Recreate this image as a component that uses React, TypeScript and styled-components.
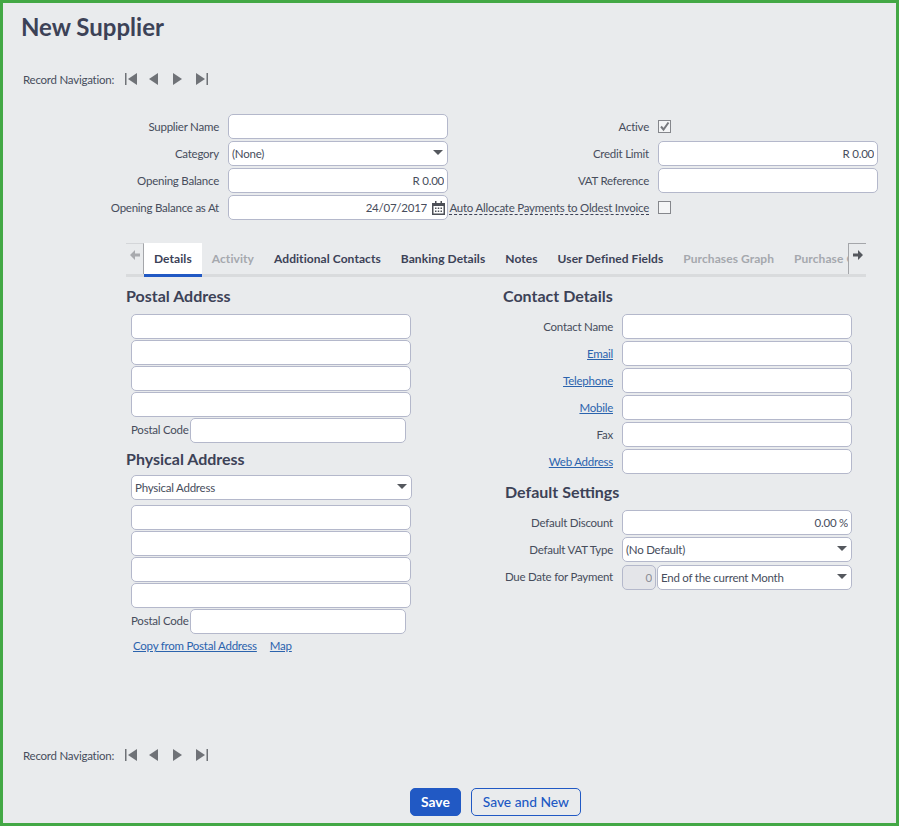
import React from 'react';
import styled, { createGlobalStyle, css } from 'styled-components';

const GlobalStyle = createGlobalStyle`
  html, body { margin: 0; padding: 0; }
  body { font-family: Lato, "Open Sans", sans-serif; font-size: 12px; color: #474d5c; background: #e9ebed; }
`;

// Reference text is 12px but hinted tight, so the advance is narrower than Lato's own
const bodyText = css`
  font-size: 11.5px;
  letter-spacing: -0.24px;
`;

const Page = styled.div`
  box-sizing: border-box;
  width: 899px;
  height: 826px;
  border: 3px solid #43a845;
  background: #e9ebed;
  display: flex;
  flex-direction: column;
  overflow: hidden;
`;

const Title = styled.h1`
  margin: 10px 0 0 18px;
  font-size: 24px;
  line-height: 28px;
  font-weight: 700;
  color: #3c4257;
`;

const NavRow = styled.div<{ $top: number }>`
  display: flex;
  align-items: center;
  height: 18px;
  margin: ${(p) => p.$top}px 0 0 20px;
`;

const NavLabel = styled.span`
  ${bodyText}
  margin-right: 11px;
  color: #474d5c;
`;

const NavButton = styled.svg`
  width: 12px;
  height: 14px;
  margin-right: 12px;
  fill: #6f7277;
  overflow: visible;
`;

const TopForm = styled.div`
  display: grid;
  grid-template-columns: 128px 220px 210px 220px;
  grid-auto-rows: 25px;
  row-gap: 2px;
  margin: 26px 0 0 97px;
`;

const Label = styled.label`
  ${bodyText}
  display: flex;
  align-items: center;
  justify-content: flex-end;
  padding-right: 9px;
  white-space: nowrap;
  color: #474d5c;
`;

const DashedLabel = styled.span`
  border-bottom: 1px dashed #3c4257;
  line-height: 13px;
`;

const Input = styled.input<{ $width?: number; $disabled?: boolean }>`
  ${bodyText}
  box-sizing: border-box;
  display: block;
  width: ${(p) => (p.$width ? `${p.$width}px` : '100%')};
  height: 25px;
  padding: 0 3px;
  border: 1px solid #b4b8cb;
  border-radius: 5px;
  background: ${(p) => (p.$disabled ? '#e4e5e9' : '#fff')};
  font-family: inherit;
  color: ${(p) => (p.$disabled ? '#8b8e96' : '#474d5c')};
  text-align: ${(p) => (p.type === 'tel' ? 'right' : 'left')};
  outline: none;
`;

const SelectBox = styled.div<{ $width?: number }>`
  ${bodyText}
  box-sizing: border-box;
  display: flex;
  align-items: center;
  justify-content: space-between;
  width: ${(p) => (p.$width ? `${p.$width}px` : '100%')};
  height: 25px;
  padding: 0 4px 0 3px;
  border: 1px solid #b4b8cb;
  border-radius: 5px;
  background: #fff;
  color: #474d5c;
`;

const Caret = styled.span`
  width: 0;
  height: 0;
  margin-top: -2px;
  border-left: 5px solid transparent;
  border-right: 5px solid transparent;
  border-top: 5px solid #55585e;
`;

const DateWrap = styled.div`
  position: relative;
`;

const DateInput = styled(Input)`
  padding-right: 20px;
`;

const CalendarIcon = styled.svg`
  position: absolute;
  top: 6px;
  right: 3px;
  width: 13px;
  height: 14px;
`;

const CheckCell = styled.div`
  display: flex;
  align-items: center;
`;

const CheckBox = styled.span`
  box-sizing: border-box;
  display: flex;
  align-items: center;
  justify-content: center;
  width: 13px;
  height: 13px;
  border: 1px solid #85878c;
  background: #f4f5f6;
`;

const TabStrip = styled.div`
  position: relative;
  box-sizing: border-box;
  display: flex;
  width: 740px;
  height: 34px;
  margin: 23px 0 0 123px;
  box-shadow: inset 0 -3px 0 #d9dbdd;
  overflow: hidden;
`;

const TabArrow = styled.div<{ $side: 'left' | 'right' }>`
  flex: none;
  width: 18px;
  height: 31px;
  box-sizing: border-box;
  display: flex;
  justify-content: center;
  padding-top: 6px;
  border-top: 1px solid ${(p) => (p.$side === 'right' ? '#a4a6aa' : '#d4d6d9')};
  border-${(p) => (p.$side === 'right' ? 'left' : 'right')}: 1px solid #a4a6aa;
  background: #e9ebed;
  ${(p) => (p.$side === 'right' ? 'position: absolute; right: 0; top: 0;' : '')}
`;

const Tab = styled.div<{ $active?: boolean; $muted?: boolean }>`
  flex: none;
  box-sizing: border-box;
  height: 34px;
  padding: 9px 10px 0;
  font-size: 12px;
  letter-spacing: 0.07px;
  line-height: 14px;
  font-weight: 700;
  white-space: nowrap;
  background: ${(p) => (p.$active ? '#fff' : 'transparent')};
  border-bottom: ${(p) => (p.$active ? '3px solid #2159c4' : 'none')};
  color: ${(p) => (p.$muted ? '#a5a8ae' : '#3c4257')};
`;

const Columns = styled.div`
  display: flex;
  margin: 9px 0 0 123px;
`;

const LeftColumn = styled.div`
  width: 377px;
`;

const Heading = styled.h2<{ $top?: number; $bottom?: number; $indent?: number }>`
  margin: ${(p) => p.$top ?? 0}px 0 ${(p) => p.$bottom ?? 8}px ${(p) => p.$indent ?? 0}px;
  font-size: 16px;
  line-height: 20px;
  font-weight: 700;
  color: #3c4257;
`;

const AddressStack = styled.div`
  display: flex;
  flex-direction: column;
  gap: 1px;
  margin-left: 5px;
`;

const PostalRow = styled.div`
  display: flex;
  align-items: center;
`;

const PostalLabel = styled.span`
  ${bodyText}
  width: 59px;
  padding-bottom: 3px;
  white-space: nowrap;
`;

const SelectGap = styled.div`
  margin-bottom: 4px;
`;

const LinkRow = styled.div`
  display: flex;
  gap: 13px;
  margin: 3px 0 0 2px;
`;

const TextLink = styled.a`
  ${bodyText}
  line-height: 15px;
  color: #2b63ad;
  text-decoration: underline;
`;

const RightColumn = styled.div`
  width: 360px;
`;

const FieldGrid = styled.div`
  display: grid;
  grid-template-columns: 119px 230px;
  grid-auto-rows: 25px;
  row-gap: 2px;
`;

const RightLabel = styled.div`
  ${bodyText}
  display: flex;
  align-items: center;
  justify-content: flex-end;
  padding-right: 9px;
  white-space: nowrap;
`;

const DueCell = styled.div`
  display: flex;
  gap: 1px;
  margin-top: 1px;
`;

const Spacer = styled.div`
  flex: 1;
`;

const ButtonRow = styled.div`
  display: flex;
  gap: 10px;
  margin: 24px 0 7px 407px;
`;

const Button = styled.button<{ $primary?: boolean }>`
  box-sizing: border-box;
  height: 28px;
  padding: 0 ${(p) => (p.$primary ? 10 : 11)}px 2px;
  border: 1px solid #2159c4;
  border-radius: 5px;
  background: ${(p) => (p.$primary ? '#2159c4' : 'transparent')};
  color: ${(p) => (p.$primary ? '#fff' : '#2159c4')};
  font-family: inherit;
  font-size: 13.8px;
  font-weight: ${(p) => (p.$primary ? 700 : 500)};
`;

const RecordNavigation: React.FC<{ top: number }> = ({ top }) => (
  <NavRow $top={top}>
    <NavLabel>Record Navigation:</NavLabel>
    <NavButton viewBox="0 0 12 14"><rect x="0" y="1" width="1.5" height="12" /><path d="M12 1v12L3 7z" /></NavButton>
    <NavButton viewBox="0 0 12 14"><path d="M9 1v12L0 7z" /></NavButton>
    <NavButton viewBox="0 0 12 14"><path d="M0 1v12l9-6z" /></NavButton>
    <NavButton viewBox="0 0 12 14"><path d="M-1 1v12l9-6z" /><rect x="9.500" y="1" width="1.500" height="12" /></NavButton>
  </NavRow>
);

const ArrowIcon: React.FC<{ flip?: boolean; color: string }> = ({ flip, color }) => (
  <svg width="10" height="10" viewBox="0 0 10 10" style={{ transform: flip ? 'scaleX(-1)' : undefined }}>
    <path d="M0 3.500h5V0l5 5-5 5V6.500H0z" fill={color} />
  </svg>
);

const Select: React.FC<{ value: string; width?: number }> = ({ value, width }) => (
  <SelectBox $width={width}>
    <span>{value}</span>
    <Caret />
  </SelectBox>
);

const tabs = [
  { name: 'Details', active: true },
  { name: 'Activity', muted: true },
  { name: 'Additional Contacts' },
  { name: 'Banking Details' },
  { name: 'Notes' },
  { name: 'User Defined Fields' },
  { name: 'Purchases Graph', muted: true },
  { name: 'Purchase Orders', muted: true },
];

const contactRows = [
  { label: 'Contact Name' },
  { label: 'Email', link: true },
  { label: 'Telephone', link: true },
  { label: 'Mobile', link: true },
  { label: 'Fax' },
  { label: 'Web Address', link: true },
];

const AddressLines: React.FC = () => (
  <>
    <Input $width={280} />
    <Input $width={280} />
    <Input $width={280} />
    <Input $width={280} />
    <PostalRow>
      <PostalLabel>Postal Code</PostalLabel>
      <Input $width={216} />
    </PostalRow>
  </>
);

const App: React.FC = () => (
  <Page>
    <GlobalStyle />
    <Title>New Supplier</Title>
    <RecordNavigation top={29} />

    <TopForm>
      <Label>Supplier Name</Label>
      <Input />
      <Label>Active</Label>
      <CheckCell>
        <CheckBox>
          <svg width="11" height="11" viewBox="0 0 11 11">
            <path d="M2 5.500l2.500 3L9.500 1.500" fill="none" stroke="#77797e" strokeWidth="2" />
          </svg>
        </CheckBox>
      </CheckCell>

      <Label>Category</Label>
      <Select value="(None)" />
      <Label>Credit Limit</Label>
      <Input type="tel" defaultValue="R 0.00" />

      <Label>Opening Balance</Label>
      <Input type="tel" defaultValue="R 0.00" />
      <Label>VAT Reference</Label>
      <Input />

      <Label>Opening Balance as At</Label>
      <DateWrap>
        <DateInput type="tel" defaultValue="24/07/2017" />
        <CalendarIcon viewBox="0 0 13 14">
          <path d="M0 2h13v12H0z" fill="#4d5057" />
          <path d="M1.500 5h10v7.500h-10z" fill="#fff" />
          <path d="M3 0h1.500v3H3zM8.500 0H10v3H8.500z" fill="#4d5057" />
          <path d="M3 6.500h1.500V8H3zM5.750 6.500h1.500V8h-1.500zM8.500 6.500H10V8H8.500zM3 9.500h1.500V11H3zM5.750 9.500h1.500V11h-1.500zM8.500 9.500H10V11H8.500z" fill="#4d5057" />
        </CalendarIcon>
      </DateWrap>
      <Label><DashedLabel>Auto Allocate Payments to Oldest Invoice</DashedLabel></Label>
      <CheckCell><CheckBox /></CheckCell>
    </TopForm>

    <TabStrip>
      <TabArrow $side="left"><ArrowIcon flip color="#a8aaae" /></TabArrow>
      {tabs.map((tab) => (
        <Tab key={tab.name} $active={tab.active} $muted={tab.muted}>{tab.name}</Tab>
      ))}
      <TabArrow $side="right"><ArrowIcon color="#55585e" /></TabArrow>
    </TabStrip>

    <Columns>
      <LeftColumn>
        <Heading>Postal Address</Heading>
        <AddressStack>
          <AddressLines />
        </AddressStack>
        <Heading $top={6} $bottom={6}>Physical Address</Heading>
        <AddressStack>
          <SelectGap><Select value="Physical Address" width={281} /></SelectGap>
          <AddressLines />
          <LinkRow>
            <TextLink>Copy from Postal Address</TextLink>
            <TextLink>Map</TextLink>
          </LinkRow>
        </AddressStack>
      </LeftColumn>

      <RightColumn>
        <Heading>Contact Details</Heading>
        <FieldGrid>
          {contactRows.map((row) => (
            <React.Fragment key={row.label}>
              <RightLabel>{row.link ? <TextLink>{row.label}</TextLink> : row.label}</RightLabel>
              <Input />
            </React.Fragment>
          ))}
        </FieldGrid>
        <Heading $top={8} $indent={2}>Default Settings</Heading>
        <FieldGrid>
          <RightLabel>Default Discount</RightLabel>
          <Input type="tel" defaultValue="0.00 %" />
          <RightLabel>Default VAT Type</RightLabel>
          <Select value="(No Default)" />
          <RightLabel>Due Date for Payment</RightLabel>
          <DueCell>
            <Input type="tel" $width={34} $disabled defaultValue="0" />
            <Select value="End of the current Month" width={195} />
          </DueCell>
        </FieldGrid>
      </RightColumn>
    </Columns>

    <Spacer />
    <RecordNavigation top={0} />
    <ButtonRow>
      <Button $primary>Save</Button>
      <Button>Save and New</Button>
    </ButtonRow>
  </Page>
);

export default App;
